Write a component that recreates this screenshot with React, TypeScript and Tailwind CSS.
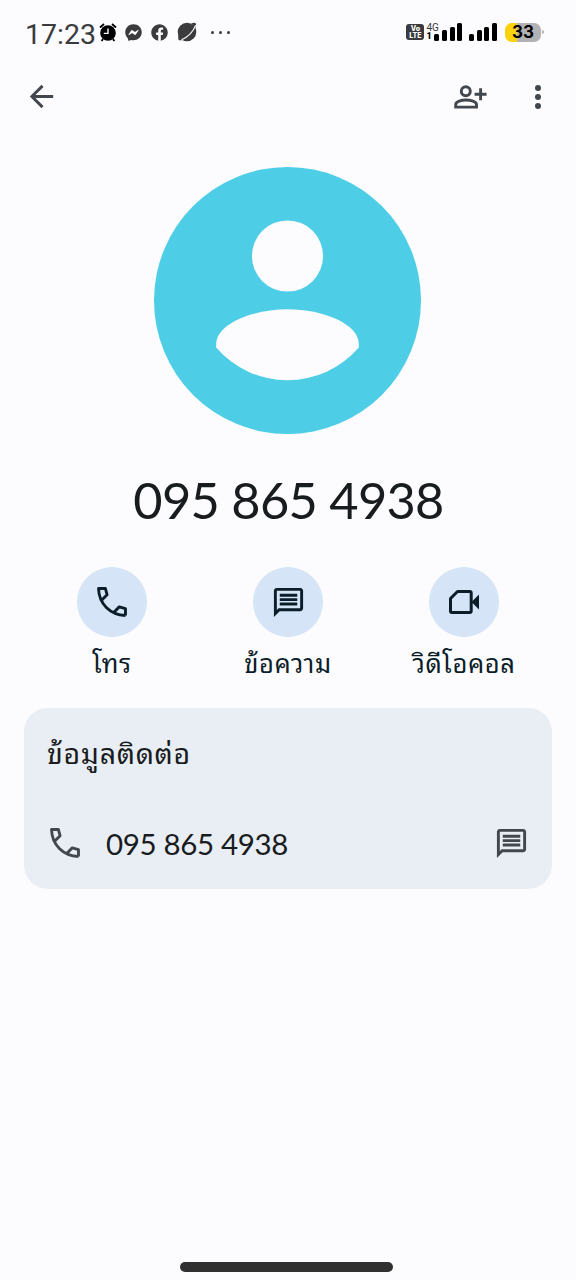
import type { ReactNode } from "react"
import { FaFacebook, FaFacebookMessenger } from "react-icons/fa"
import { MdArrowBack, MdOutlineMessage } from "react-icons/md"

const PHONE_NUMBER = "095 865 4938"

function PhoneIcon() {
  return (
    <svg viewBox="0 0 89 89" className="size-[30px]" fill="none" stroke="currentColor" strokeWidth="8.5">
      <path d="M84.5 84.5C38 82 6 50 4.5 4.5H25L30 23L15 38M84.5 84.5V64L66 59L51 74" strokeLinejoin="round" />
    </svg>
  )
}

function VideoIcon() {
  return (
    <svg viewBox="0 0 30 24" className="h-6 w-[30px]">
      <path d="M8.5 1.5H20.7Q22.2 1.5 22.2 3V21Q22.2 22.5 20.7 22.5H3Q1.5 22.5 1.5 21V8.5Z" fill="none" stroke="currentColor" strokeWidth="3" strokeLinejoin="round" />
      <path d="M22.5 12L30 4.5V19.5Z" fill="currentColor" />
    </svg>
  )
}

function PersonAddIcon() {
  return (
    <svg viewBox="0 0 33 24" className="h-6 w-[33px]" fill="none" stroke="currentColor" strokeWidth="2.9">
      <circle cx="11.8" cy="6.2" r="4.5" />
      <path d="M1.7 22.1V19.6C1.7 16.6 7.5 15 12 15S22.5 16.6 22.5 19.6V22.1Z" />
      <path d="M26.6 3.2V15.2M20.6 9.2H32.6" />
    </svg>
  )
}

function AlarmIcon() {
  return (
    <svg viewBox="0 0 18 19" className="h-[19px] w-[18px] text-black">
      <path d="M1 4.5L5 1M17 4.5L13 1M4 16L2.6 18M14 16L15.4 18" stroke="currentColor" strokeWidth="1.8" />
      <circle cx="9" cy="10" r="7.8" fill="currentColor" />
      <path d="M9 5.5V10.4H4.8" fill="none" stroke="#fcfcff" strokeWidth="1.4" />
    </svg>
  )
}

function PlanetIcon() {
  return (
    <svg viewBox="0 0 20 20" className="size-5">
      <circle cx="10" cy="10" r="9.3" fill="currentColor" />
      <path d="M1 13L1.5 18Q3.5 18.6 6 18ZM14 1.5Q17.5 0.3 18.8 1.2Q19.6 2.5 18.6 6Z" fill="currentColor" />
      <path d="M4.5 17.8Q14.5 13.5 18.7 3.2" fill="none" stroke="#fcfcff" strokeWidth="1.1" />
    </svg>
  )
}

function SignalBars() {
  return (
    <div className="flex h-[18px] items-end gap-[2.6px]">
      <div className="h-[7px] w-[5px] rounded-[1.5px] bg-black" />
      <div className="h-[11px] w-[5px] rounded-[1.5px] bg-black" />
      <div className="h-[14px] w-[5px] rounded-[1.5px] bg-black" />
      <div className="h-[18px] w-[5px] rounded-[1.5px] bg-black" />
    </div>
  )
}

function StatusBar() {
  return (
    <div className="flex h-16 items-center pl-[25px] pr-[32px] text-[#3b3b3d]">
      <span className="mt-[6px] w-[74px] font-[Roboto] text-[28.5px] leading-8">17:23</span>
      <AlarmIcon />
      <FaFacebookMessenger className="ml-2 size-[17px]" />
      <FaFacebook className="ml-[9px] size-[17px]" />
      <div className="ml-[9px]">
        <PlanetIcon />
      </div>
      <div className="ml-[14px] flex gap-[5px]">
        <span className="size-[3px] rounded-full bg-current" />
        <span className="size-[3px] rounded-full bg-current" />
        <span className="size-[3px] rounded-full bg-current" />
      </div>

      <div className="ml-auto flex items-center">
        <div className="flex h-4 w-[18px] flex-col items-center justify-center rounded-[3px] bg-[#3b3b3d] font-[Inter] text-[7px] font-extrabold leading-[7px] text-white">
          <span>Vo</span>
          <span>LTE</span>
        </div>
        <div className="ml-[2px] flex w-[8px] flex-col font-[Roboto] leading-[9px]">
          <span className="text-[10px]">4G</span>
          <span className="text-[9px] font-black text-black">1</span>
        </div>
        <SignalBars />
        <div className="ml-[7px]">
          <SignalBars />
        </div>
        <div className="ml-2 flex h-[19px] w-9 items-center justify-center rounded-[7px] bg-[linear-gradient(90deg,#fbd10a_33%,#b2b2b4_33%)] font-[Inter] text-[17px] font-bold leading-none text-black">
          33
        </div>
        <div className="ml-px h-1 w-[2px] rounded-r-full bg-[#b2b2b4]" />
      </div>
    </div>
  )
}

function Avatar() {
  return (
    <svg viewBox="0 0 267 267" className="mr-px size-[267px]">
      <circle cx="133.5" cy="133.5" r="133.5" fill="#4ecde6" />
      <circle cx="133.5" cy="89" r="35.6" fill="#fcfcff" />
      <path d="M62.2 177C62.2 157 98 142.3 133.5 142.3S204.8 157 204.8 177V180.5A94 94 0 0 1 62.2 180.5Z" fill="#fcfcff" />
    </svg>
  )
}

function Action({ icon, label }: { icon: ReactNode; label: string }) {
  return (
    <button className="flex flex-col items-center text-[#0b1d29]">
      <span className="flex size-[70px] items-center justify-center rounded-full bg-[#d5e4f7]">{icon}</span>
      <span className="mb-[3px] mt-[5px] whitespace-nowrap text-[25.5px] leading-10 tracking-[0.6px]">{label}</span>
    </button>
  )
}

export default function App() {
  return (
    <div className="flex h-[1280px] w-[576px] flex-col overflow-hidden bg-[#fcfcff] font-['Noto_Sans_Thai_Looped','Noto_Looped_Thai','Sarabun','Loma','Waree','Garuda','FreeSans','Noto_Serif_Thai','FreeSerif',serif] text-[#191c1e]">
      <StatusBar />

      {/* Toolbar */}
      <div className="flex h-[65px] items-center pl-6 pr-[35px] text-[#42474e]">
        <MdArrowBack className="size-[35px]" />
        <div className="ml-auto">
          <PersonAddIcon />
        </div>
        <div className="ml-12 flex flex-col gap-[3px]">
          <span className="size-[6px] rounded-full bg-current" />
          <span className="size-[6px] rounded-full bg-current" />
          <span className="size-[6px] rounded-full bg-current" />
        </div>
      </div>

      <div className="mt-[38px] flex flex-col items-center">
        <Avatar />
        <h1 className="mt-[36px] pl-px font-[Lato] text-[50.5px] leading-[60px] tracking-[-0.7px]">{PHONE_NUMBER}</h1>
      </div>

      {/* Quick actions */}
      <div className="mx-6 mt-[37px] grid grid-cols-3">
        <Action icon={<PhoneIcon />} label="โทร" />
        <Action icon={<MdOutlineMessage className="size-[35px]" />} label="ข้อความ" />
        <Action icon={<VideoIcon />} label="วิดีโอคอล" />
      </div>

      {/* Contact info */}
      <div className="mx-6 mt-[23px] h-[181px] rounded-3xl bg-[#e9eef5] px-6 pt-[23px]">
        <h2 className="-ml-px text-[28.5px] leading-10 tracking-[0.7px]">ข้อมูลติดต่อ</h2>
        <div className="mt-[52px] flex items-center text-[#42474e]">
          <div className="mb-px ml-[2px]">
            <PhoneIcon />
          </div>
          <span className="ml-[26px] mt-px font-[Lato] text-[29.5px] leading-10 tracking-[-0.35px] text-[#191c1e]">{PHONE_NUMBER}</span>
          <MdOutlineMessage className="-mr-[1px] ml-auto size-[35px]" />
        </div>
      </div>

      {/* Gesture bar */}
      <div className="mb-2 ml-[180px] mt-auto h-[10px] w-[213px] rounded-full bg-[#303030]" />
    </div>
  )
}
